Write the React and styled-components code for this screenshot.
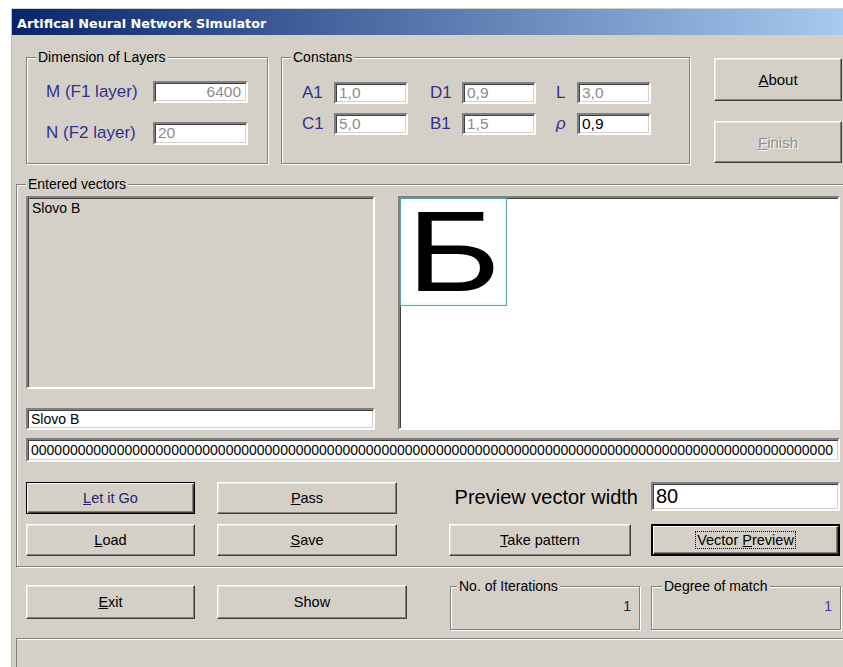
import React from 'react';
import styled, { createGlobalStyle } from 'styled-components';

const face = '#d4d0c8';

const GlobalStyle = createGlobalStyle`
  html, body {
    margin: 0;
    padding: 0;
    background: #fff;
  }
  body {
    font-family: "Liberation Sans", Arial, sans-serif;
    color: #000;
  }
`;

const Window = styled.div`
  margin: 8px 0 0 11px;
  width: 832px;
  height: 659px;
  box-sizing: border-box;
  background: ${face};
  border-left: 1px solid #b4c4d8;
  overflow: hidden;
  display: flex;
  flex-direction: column;
`;

const TitleBar = styled.div`
  flex: none;
  height: 26px;
  margin-top: 1px;
  padding: 2px 0 0 5px;
  box-sizing: border-box;
  display: flex;
  align-items: center;
  background: linear-gradient(to right, #0a246a 0%, #a6caf0 100%);
  color: #fff;
  font: bold 12.8px "DejaVu Sans", Tahoma, sans-serif;
  white-space: nowrap;
`;

const Client = styled.div`
  flex: 1;
  display: flex;
  flex-direction: column;
  padding-left: 4px;
`;

const TopRow = styled.div`
  display: flex;
  align-items: flex-start;
  margin-top: 14px;
  padding-left: 10px;
`;

/* etched group frame, windows classic style */
const Group = styled.fieldset`
  margin: 0;
  padding: 0;
  min-width: 0;
  box-sizing: border-box;
  width: ${(p) => p.$w}px;
  height: ${(p) => (p.$h ? `${p.$h}px` : 'auto')};
  flex: none;
  border: 1px solid #808080;
  box-shadow: 1px 1px 0 #fff, inset 1px 1px 0 #fff;
`;

const Legend = styled.legend`
  margin-left: ${(p) => p.$indent ?? 9}px;
  padding: 0 2px;
  font-size: 14px;
  line-height: 16px;
  background: ${face};
`;

const LayerGrid = styled.div`
  display: grid;
  grid-template-columns: 107px 95px;
  grid-auto-rows: 22px;
  row-gap: 19px;
  align-items: center;
  padding: 16px 0 0 19px;
`;

const ConstGrid = styled.div`
  display: grid;
  grid-template-columns: 32px 74px 54px 74px 41px 74px;
  grid-auto-rows: 22px;
  row-gap: 9px;
  align-items: center;
  padding: 17px 0 0 20px;
`;

const Label = styled.span`
  padding-left: ${(p) => p.$indent || 0}px;
  font-size: ${(p) => p.$size || 17}px;
  font-style: ${(p) => (p.$italic ? 'italic' : 'normal')};
  color: #32328c;
  white-space: nowrap;
`;

/* sunken edit box */
const Field = styled.div`
  box-sizing: border-box;
  height: ${(p) => p.$h || 22}px;
  padding: 0 ${(p) => (p.$right ? 5 : 3)}px 0 3px;
  display: flex;
  align-items: center;
  justify-content: ${(p) => (p.$right ? 'flex-end' : 'flex-start')};
  background: #fff;
  border: 2px solid;
  border-color: #808080 #fff #fff #808080;
  box-shadow: inset 1px 1px 0 #404040, inset -1px -1px 0 ${face};
  font-size: ${(p) => p.$size || 15.5}px;
  color: ${(p) => (p.$disabled ? '#8c8c8c' : '#000')};
  white-space: nowrap;
  overflow: hidden;
`;

const SideButtons = styled.div`
  display: flex;
  flex-direction: column;
  gap: 20px;
  width: 128px;
  margin: 9px 0 0 24px;
`;

const Button = styled.button`
  box-sizing: border-box;
  width: ${(p) => (p.$w ? `${p.$w}px` : '100%')};
  height: ${(p) => p.$h || 32}px;
  padding: 0;
  margin: 0;
  background: ${face};
  font-family: "Liberation Sans", Arial, sans-serif;
  font-size: ${(p) => p.$size || 14.5}px;
  color: ${(p) => (p.$disabled ? '#8c8c8c' : p.$blue ? '#24246e' : '#000')};
  text-shadow: ${(p) => (p.$disabled ? '1px 1px 0 #fff' : 'none')};
  border: ${(p) => (p.$focus ? 2 : 1)}px solid;
  border-color: ${(p) => (p.$default ? '#000' : '#fff #404040 #404040 #fff')};
  box-shadow: ${(p) =>
    p.$default
      ? 'inset 1px 1px 0 #fff, inset -1px -1px 0 #404040, inset -2px -2px 0 #808080'
      : 'inset -1px -1px 0 #808080, inset 1px 1px 0 #e8e6e0'};
  display: flex;
  align-items: center;
  justify-content: center;
`;

const FocusText = styled.span`
  outline: 1px dotted #000;
  padding: 0 1px;
`;

const VectorsBody = styled.div`
  padding: 4px 9px 10px 9px;
`;

const VectorsTop = styled.div`
  display: grid;
  grid-template-columns: 349px 1fr;
  grid-template-rows: 193px 22px;
  column-gap: 23px;
  row-gap: 19px;
`;

const ListBox = styled.div`
  box-sizing: border-box;
  padding: 2px 4px;
  background: ${face};
  border: 2px solid;
  border-color: #808080 #fff #fff #808080;
  box-shadow: inset 1px 1px 0 #404040, inset -1px -1px 0 ${face};
  font-size: 14px;
  line-height: 16px;
`;

const Preview = styled.div`
  grid-column: 2;
  grid-row: 1 / span 2;
  box-sizing: border-box;
  background: #fff;
  border: 2px solid;
  border-color: #808080 #fff #fff #808080;
  box-shadow: inset 1px 1px 0 #404040;
`;

const PatternCell = styled.div`
  width: 107px;
  height: 108px;
  box-sizing: border-box;
  border: 1px solid #6a9ea6;
  box-shadow: inset 0 0 4px #c6f3f7;
  display: flex;
  align-items: center;
  justify-content: center;
`;

const PatternGlyph = styled.span`
  font-family: "Liberation Sans", Arial, sans-serif;
  font-size: 115px;
  line-height: 84px;
  height: 84px;
  color: #000;
  transform: translateY(-1px) scaleX(1.25);
`;

const Zeros = styled(Field)`
  margin-top: 8px;
  font-size: 14px;
`;

const Controls = styled.div`
  display: flex;
  gap: 52px;
  margin-top: 20px;
`;

const ButtonGrid = styled.div`
  flex: ${(p) => (p.$grow ? 1 : 'none')};
  display: grid;
  grid-template-columns: ${(p) => p.$cols};
  grid-template-rows: 31px 32px;
  column-gap: ${(p) => p.$gap}px;
  row-gap: 11px;
  align-items: start;
`;

const WidthLabel = styled.span`
  justify-self: end;
  align-self: center;
  padding-right: 2px;
  font-size: 20px;
  color: #000;
  white-space: nowrap;
`;

const BottomRow = styled.div`
  display: flex;
  align-items: flex-start;
  margin-top: 11px;
  padding-left: 10px;
`;

const ButtonPair = styled.div`
  display: flex;
  gap: 22px;
  padding-top: 7px;
  margin-right: 43px;
`;

const Counters = styled.div`
  display: flex;
  gap: 11px;
`;

const CounterValue = styled.div`
  margin-top: 5px;
  padding-right: 8px;
  text-align: right;
  font-size: 14px;
  line-height: 14px;
  color: ${(p) => p.$color || '#222'};
`;

const StatusBar = styled.div`
  flex: none;
  height: 28px;
  margin-top: auto;
  border-top: 1px solid #808080;
  border-left: 1px solid #808080;
  box-shadow: inset 0 1px 0 #fff;
`;

const App = () => {
  return (
    <>
      <GlobalStyle />
      <Window>
        <TitleBar>Artifical Neural Network Simulator</TitleBar>
        <Client>
          <TopRow>
            <Group $w={242} $h={115}>
              <Legend>Dimension of Layers</Legend>
              <LayerGrid>
                <Label>M (F1 layer)</Label>
                <Field $disabled $right>6400</Field>
                <Label>N (F2 layer)</Label>
                <Field $disabled $h={23}>20</Field>
              </LayerGrid>
            </Group>

            <Group $w={409} $h={115} style={{ marginLeft: 13 }}>
              <Legend>Constans</Legend>
              <ConstGrid>
                <Label>A1</Label>
                <Field $disabled>1,0</Field>
                <Label $indent={22}>D1</Label>
                <Field $disabled>0,9</Field>
                <Label $indent={20}>L</Label>
                <Field $disabled>3,0</Field>

                <Label>C1</Label>
                <Field $disabled>5,0</Field>
                <Label $indent={22}>B1</Label>
                <Field $disabled>1,5</Field>
                <Label $indent={20} $italic>ρ</Label>
                <Field>0,9</Field>
              </ConstGrid>
            </Group>

            <SideButtons>
              <Button $h={43} $size={15}>
                <span><u>A</u>bout</span>
              </Button>
              <Button $h={42} $size={15} $disabled>
                <span><u>F</u>inish</span>
              </Button>
            </SideButtons>
          </TopRow>

          <Group $w={834} style={{ marginTop: 12 }}>
            <Legend>Entered vectors</Legend>
            <VectorsBody>
              <VectorsTop>
                <ListBox>Slovo B</ListBox>
                <Preview>
                  <PatternCell>
                    <PatternGlyph>Б</PatternGlyph>
                  </PatternCell>
                </Preview>
                <Field $size={14}>Slovo B</Field>
              </VectorsTop>

              <Zeros $h={24}>{'0'.repeat(103)}</Zeros>

              <Controls>
                <ButtonGrid $cols="169px 180px" $gap={22}>
                  <Button $default $blue>
                    <span><u>L</u>et it Go</span>
                  </Button>
                  <Button>
                    <span><u>P</u>ass</span>
                  </Button>
                  <Button>
                    <span><u>L</u>oad</span>
                  </Button>
                  <Button>
                    <span><u>S</u>ave</span>
                  </Button>
                </ButtonGrid>

                <ButtonGrid $cols="191px 1fr" $gap={11} $grow>
                  <WidthLabel>Preview vector width</WidthLabel>
                  <Field $h={29} $size={20}>80</Field>
                  <Button $w={182}>
                    <span><u>T</u>ake pattern</span>
                  </Button>
                  <Button $default $focus>
                    <FocusText>Vector <u>P</u>review</FocusText>
                  </Button>
                </ButtonGrid>
              </Controls>
            </VectorsBody>
          </Group>

          <BottomRow>
            <ButtonPair>
              <Button $w={169} $h={34}>
                <span><u>E</u>xit</span>
              </Button>
              <Button $w={190} $h={34}>Show</Button>
            </ButtonPair>
            <Counters>
              <Group $w={190} $h={52}>
                <Legend $indent={6}>No. of Iterations</Legend>
                <CounterValue>1</CounterValue>
              </Group>
              <Group $w={190} $h={52}>
                <Legend $indent={10}>Degree of match</Legend>
                <CounterValue $color="#3a3ab0">1</CounterValue>
              </Group>
            </Counters>
          </BottomRow>

          <StatusBar />
        </Client>
      </Window>
    </>
  );
};

export default App;
